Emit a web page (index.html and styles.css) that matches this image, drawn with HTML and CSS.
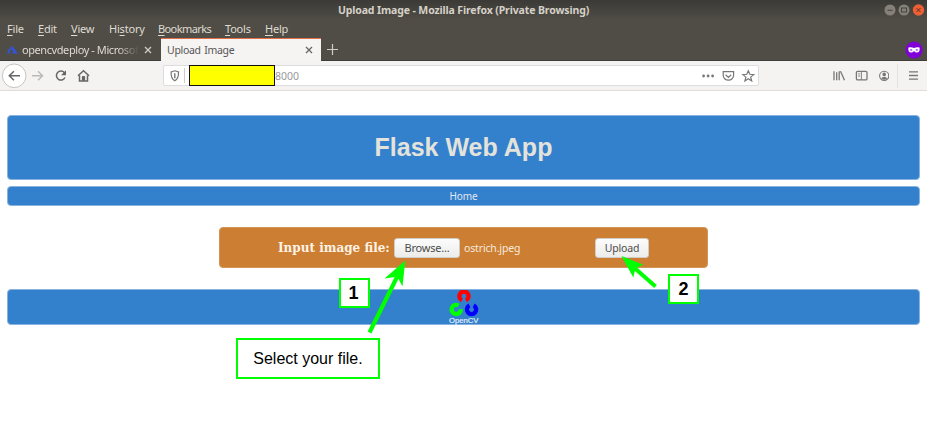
FILE: index.html
```html
<!DOCTYPE html>
<html lang="en">
<head>
<meta charset="utf-8">
<title>Upload Image</title>
<link rel="stylesheet" href="styles.css">
</head>
<body>
<div class="window">
  <div class="chrome">
    <div class="titlebar">
      <span class="window-title">Upload Image - Mozilla Firefox (Private Browsing)</span>
      <svg class="window-buttons" width="44" height="14" viewBox="0 0 44 14">
        <circle cx="7" cy="7" r="5.5" fill="#858179"/><path d="M4.5 7.3h5" stroke="#45433d"/>
        <circle cx="21" cy="7" r="5.5" fill="#858179"/><rect x="18.5" y="5" width="5" height="4" fill="none" stroke="#45433d"/>
        <circle cx="35.5" cy="7" r="5.7" fill="#ed6036"/><path d="M33.5 5l4 4m0-4l-4 4" stroke="#65301e"/>
      </svg>
    </div>
    <nav class="menubar">
      <span><u>F</u>ile</span><span><u>E</u>dit</span><span><u>V</u>iew</span><span>Hi<u>s</u>tory</span><span class="menu-wide"><u>B</u>ookmarks</span><span><u>T</u>ools</span><span><u>H</u>elp</span>
    </nav>
    <div class="tabs">
      <div class="tab">
        <svg width="11" height="10" viewBox="0 0 11 10"><path d="M5.1.5L2.4 3 0 8.4h2.2zM5.5 1.2L4.3 4.5l2.4 2.8-4.5 1.3H11z" fill="#3455d8"/></svg>
        <span class="tab-name tab-name-fade">opencvdeploy - Microsof</span>
        <svg class="close" width="8" height="8" viewBox="0 0 8 8"><path d="M1 1l6 6m0-6L1 7" stroke="#d0cdc5" stroke-width="1.3"/></svg>
      </div>
      <div class="tab tab-active">
        <span class="tab-name">Upload Image</span>
        <svg class="close" width="8" height="8" viewBox="0 0 8 8"><path d="M1 1l6 6m0-6L1 7" stroke="#666560" stroke-width="1.3"/></svg>
      </div>
      <svg class="new-tab" width="11" height="11" viewBox="0 0 11 11"><path d="M5.5 0v11M0 5.5h11" stroke="#d0cdc5" stroke-width="1.2"/></svg>
      <svg class="mask" width="18" height="18" viewBox="0 0 18 18"><circle cx="9" cy="9" r="8.6" fill="#8000d7"/><path d="M3.4 6.6Q6 6 9 6.9q3-.9 5.6-.3.5 5-2.6 5-2 0-3-1.6-1 1.6-3 1.6-3.1 0-2.6-5z" fill="#fff"/><path d="M4.9 8.9q1.3-1.4 2.6 0-1.3 1.4-2.6 0zm5.6 0q1.3-1.4 2.6 0-1.3 1.4-2.6 0z" fill="#8000d7"/></svg>
    </div>
  </div>
  <div class="toolbar">
    <svg class="nav-icons" width="96" height="28" viewBox="0 0 96 28" fill="none">
      <circle cx="14.2" cy="13.8" r="11.8" fill="#fff" stroke="#c4c3c1"/>
      <path d="M20 13.8H9.3m4.6-4.5l-4.6 4.5 4.6 4.5" stroke="#666" stroke-width="1.5"/>
      <path d="M32 13.8h10.5M38 9.3l4.6 4.5-4.6 4.5" stroke="#bab9b7" stroke-width="1.4"/>
      <path d="M64.4 10.7A4.5 4.5 0 1 0 65 15.5" stroke="#666" stroke-width="1.5"/><path d="M66 8.2v5h-5z" fill="#666"/>
      <path d="M78 13.8l5.5-5 5.5 5M79.5 13.5v5.5h8v-5.5" stroke="#666" stroke-width="1.5"/><path d="M81.9 14.1h3.2v4.7h-3.2z" fill="#666"/>
    </svg>
    <div class="urlbar">
      <svg width="11" height="12" viewBox="0 0 11 12"><path d="M4.8.8L8.5 2Q8.8 8.7 4.8 10.8.8 8.7 1.1 2z" fill="none" stroke="#777" stroke-width="1.2"/><path d="M4.8 3.2v5" stroke="#777" stroke-width="1.4"/></svg>
      <span class="url-divider"></span>
      <span class="redaction"></span>
      <span class="port">8000</span>
      <svg class="url-icons" width="54" height="14" viewBox="0 0 54 14" fill="none" stroke="#777" stroke-width="1.2">
        <g fill="#777" stroke="none"><circle cx="2.6" cy="7" r="1.4"/><circle cx="7.1" cy="7" r="1.4"/><circle cx="11.6" cy="7" r="1.4"/></g>
        <path d="M22.2 2.7h10.4v3.5a5.2 5 0 0 1-10.4 0zM24.6 5.8l2.8 2.6 2.8-2.6"/>
        <path d="M47.3 1.8l1.5 3.5 3.9.3-3 2.5 1 3.8-3.4-2.1-3.4 2.1 1-3.8-3-2.5 3.9-.3z"/>
      </svg>
    </div>
    <svg class="tools" width="58" height="14" viewBox="0 0 58 14" fill="none" stroke="#777" stroke-width="1.3">
      <path d="M3 2.2v9M5.7 3.2v8M8.2 2.2v9M9.5 2.2l4 9"/>
      <rect x="25.4" y="2.4" width="10.6" height="8.5" rx="1.2"/><path d="M30.4 2.4v8.5M27.1 4.9h2M27.1 7h2" stroke-width=".9"/>
      <circle cx="53.2" cy="6.8" r="4.6" stroke-width="1.1"/><circle cx="53.2" cy="5.4" r="1.8" fill="#777" stroke="none"/><path d="M50 9.3q3.2-3 6.4 0-3.2 2.8-6.4 0z" fill="#777" stroke="none"/>
    </svg>
    <span class="menu-divider"></span>
    <svg class="hamburger" width="9" height="9" viewBox="0 0 9 9"><path d="M0 .9h9M0 4.5h9M0 8.1h9" stroke="#777" stroke-width="1.3"/></svg>
  </div>
  <main class="page">
    <header class="panel hero"><h1>Flask Web App</h1></header>
    <nav class="panel home"><a>Home</a></nav>
    <form class="upload">
      <label>Input image file:</label>
      <button type="button" class="browse">Browse...</button>
      <span class="filename">ostrich.jpeg</span>
      <button type="button" class="submit">Upload</button>
    </form>
    <footer class="panel footer">
      <svg width="32" height="35" viewBox="0 0 32 35" fill="none" stroke-width="4.3">
        <path d="M13.9 10.3A4.6 4.6 0 1 1 18 10.3" stroke="#f00"/>
        <path d="M10.6 15.5A4.6 4.6 0 1 0 12.8 19.2" stroke="#0f0"/>
        <path d="M21.5 15.4A4.6 4.6 0 1 0 25.6 15.4" stroke="#00f"/>
        <text class="logo-text" x="1" y="32.8" textLength="29.5" lengthAdjust="spacingAndGlyphs">OpenCV</text>
      </svg>
    </footer>
  </main>
  <svg class="arrows" width="927" height="443" viewBox="0 0 927 443">
    <path d="M369.5 332.5L398 275" stroke="#0f0" stroke-width="4.2"/><path d="M405.3 260.5L402.5 286.5 397.3 276.7 384.5 278.5z" fill="#0f0"/>
    <path d="M655.5 286.5L634 267.5" stroke="#0f0" stroke-width="4"/><path d="M621.5 256L643.2 264.8 635.5 268.3 633.3 277.5z" fill="#0f0"/>
  </svg>
  <div class="callout number one">1</div>
  <div class="callout number two">2</div>
  <div class="callout note">Select your file.</div>
</div>
</body>
</html>
```
FILE: styles.css
```css
* { box-sizing: border-box; }
body { margin: 0; background: #fff; }
svg { display: block; flex: none; }
.window { position: relative; width: 927px; height: 443px; overflow: hidden; font: 11px "Noto Sans", sans-serif; }
.chrome { height: 61px; background: linear-gradient(#3b3a36 0, #504d46 20px); color: #dfdbd2; border-bottom: 1px solid #3f3d38; }
.titlebar { height: 20px; display: grid; grid-template-columns: 1fr; align-items: center; }
.window-title { grid-area: 1 / 1; text-align: center; font-weight: bold; font-size: 10.5px; letter-spacing: -.12px; color: #d5d1c8; }
.window-buttons { grid-area: 1 / 1; justify-self: end; }
.menubar { height: 18px; padding-left: 7px; display: grid; grid-template-columns: 31px 33px 38px 49px 67px 40px 40px; align-items: center; line-height: 18px; white-space: nowrap; letter-spacing: -.2px; }
.menubar u { text-underline-offset: 2px; }
.menu-wide { letter-spacing: -.6px; }
.tabs { height: 23px; display: flex; align-items: center; }
.tab { height: 23px; width: 161px; display: flex; align-items: center; padding: 0 9px 0 7px; }
.tab-name { white-space: nowrap; line-height: 18px; }
.tab-name-fade { width: 117px; margin-left: 4px; letter-spacing: -.42px; mask-image: linear-gradient(90deg, #000 82%, transparent); }
.tab-active { width: 160px; padding: 0 8px 0 6px; background: #f5f4f3; color: #555; border-top: 1px solid #e36f47; }
.tab-active .tab-name { font-size: 10.5px; letter-spacing: -.3px; word-spacing: 1px; }
.close { margin-left: auto; }
.new-tab { margin-left: 6px; }
.mask { margin-left: auto; margin-right: 4px; }
.toolbar { height: 30px; background: #f4f3f2; border-bottom: 1px solid #dedddb; display: flex; align-items: center; }
.nav-icons { margin-right: 67px; }
.urlbar { width: 596px; height: 21px; padding: 0 3px 0 6px; border: 1px solid #ddd; border-radius: 2px; background: #fff; display: flex; align-items: center; }
.url-divider { width: 1px; height: 15px; margin-left: 3px; background: #ccc; }
.redaction { width: 86px; height: 21px; margin-left: 4px; background: #ff0; border: 1px solid #111; }
.port { color: #999; font-size: 10.5px; }
.url-icons { margin-left: auto; }
.tools { margin-left: 72px; }
.menu-divider { width: 1px; height: 24px; margin-left: 8px; background: #e2e1df; }
.hamburger { margin-left: 11px; }
.page { padding: 24px 7px 0; }
.panel { background: #3380cc; border: 1px solid #88b3e0; border-radius: 4px; }
.hero { height: 65px; display: flex; justify-content: center; align-items: center; }
.hero h1 { margin: 0; font: bold 25px "Liberation Sans", sans-serif; color: #e3e3db; }
.home { height: 20px; margin-top: 6px; text-align: center; color: #e0e7ef; font: 10px/18px "Noto Sans", sans-serif; letter-spacing: -.1px; }
.upload { width: 489px; height: 41px; margin: 21px auto 0 212px; padding-left: 58px; border-radius: 4px; background: #cc7f33; border: 1px solid #d19356; display: flex; align-items: center; color: #f7e9db; white-space: nowrap; }
.upload label { width: 116px; font: bold 12px "DejaVu Serif", serif; color: #fff2e5; }
.upload button { height: 20px; padding: 0; color: #4c4c4c; font: 11px "Noto Sans", sans-serif; letter-spacing: -.2px; border: 1px solid #cfccc8; border-radius: 3px; background: linear-gradient(#fcfcfc, #ececea); }
.upload .browse { width: 66px; }
.filename { width: 131px; margin-left: 4px; font-size: 10.5px; letter-spacing: -.15px; }
.upload .submit { width: 54px; font-size: 10.5px; letter-spacing: -.2px; }
.footer { height: 36px; margin-top: 21px; display: flex; justify-content: center; }
.logo-text { font: 7.5px "Liberation Sans", sans-serif; fill: #e2edf8; stroke: #e2edf8; stroke-width: .2px; }
.arrows { position: absolute; left: 0; top: 0; }
.callout { position: absolute; display: flex; align-items: center; justify-content: center; border: 2px solid #0f0; background: #fff; color: #000; font: 16px "Liberation Sans", sans-serif; white-space: nowrap; }
.number { width: 31px; height: 30px; font-size: 18px; font-weight: bold; }
.one { left: 339px; top: 278px; padding-right: 2px; }
.two { left: 668px; top: 274px; }
.note { left: 236px; top: 338px; width: 144px; height: 41px; }
```
